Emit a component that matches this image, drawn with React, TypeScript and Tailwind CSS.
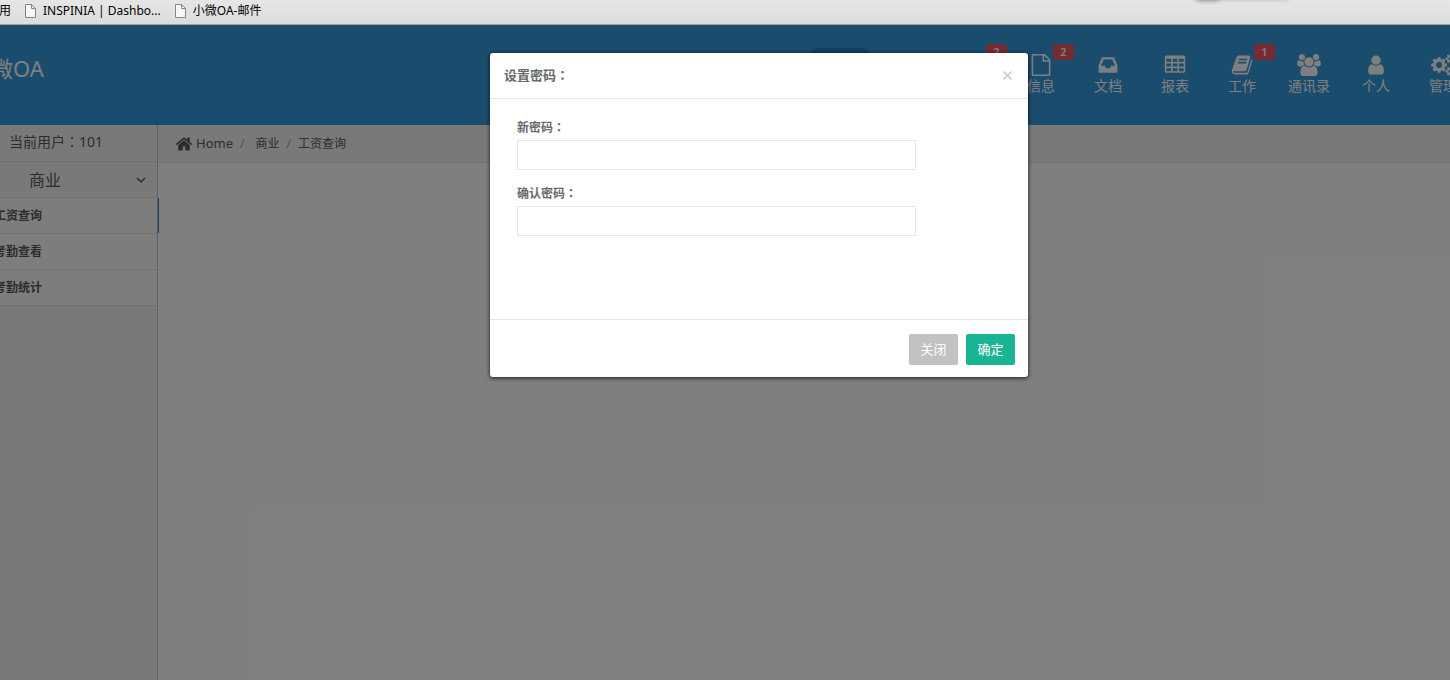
type GlyphProps = {
  d: string;
  className?: string;
  viewBox?: string;
};

const GLYPHS = {
  file: 'M1596 380q28 28 48 76t20 88v1152q0 40-28 68t-68 28h-1344q-40 0-68-28t-28-68v-1600q0-40 28-68t68-28h896q40 0 88 20t76 48zm-444-244v376h376q-10-29-22-41l-313-313q-12-12-41-22zm384 1528v-1024h-416q-40 0-68-28t-28-68v-416h-768v1536h1280z',
  inbox:
    'M1151 960h316q-1-3-2.5-8t-2.5-8l-212-496h-708l-212 496q-1 2-2.5 8t-2.5 8h316l95 192h320zm513 30v482q0 26-19 45t-45 19h-1408q-26 0-45-19t-19-45v-482q0-62 25-123l238-552q10-25 36.5-42t52.5-17h832q26 0 52.5 17t36.5 42l238 552q25 61 25 123z',
  table:
    'M224 128h1344a160 160 0 0 1 160 160v1088a160 160 0 0 1-160 160h-1344a160 160 0 0 1-160-160v-1088a160 160 0 0 1 160-160z' +
    'M192 384v256h384v-256zM704 384v256h384v-256zM1216 384v256h384v-256z' +
    'M192 768v256h384v-256zM704 768v256h384v-256zM1216 768v256h384v-256z' +
    'M192 1152v256h384v-256zM704 1152v256h384v-256zM1216 1152v256h384v-256z',
  book: 'M1703 478q40 57 18 129l-275 906q-19 64-76.5 107.5t-122.5 43.5h-923q-77 0-148.5-53.5t-99.5-131.5q-24-67-2-127 0-4 3-27t4-37q1-8-3-21.5t-3-19.5q2-11 8-21t16.5-23.5 16.5-23.5q23-38 45-91.5t30-91.5q3-10 .5-30t-.5-28q3-11 17-28t17-23q21-36 42-92t25-90q1-9-2.5-32t.5-28q4-13 22-30.5t22-22.5q19-26 42.5-84.5t27.5-96.5q1-8-3-25.5t-2-26.5q2-8 9-18t18-23 17-21q8-12 16.5-30.5t15-35 16-36 19.5-32 26.5-23.5 36-11.5 47.5 5.5l-1 3q38-9 51-9h761q74 0 114 56t18 130l-274 906q-36 119-71.5 153.5t-128.5 34.5h-869q-27 0-38 15-11 16-1 43 24 70 144 70h923q29 0 56-15.5t35-41.5l300-987q7-22 5-57 38 15 59 43zm-1064 2q-4 13 2 22.5t20 9.5h608q13 0 25.5-9.5t16.5-22.5l21-64q4-13-2-22.5t-20-9.5h-608q-13 0-25.5 9.5t-16.5 22.5zm-83 256q-4 13 2 22.5t20 9.5h608q13 0 25.5-9.5t16.5-22.5l21-64q4-13-2-22.5t-20-9.5h-608q-13 0-25.5 9.5t-16.5 22.5z',
  users:
    'M529 896q-162 5-265 128h-134q-82 0-138-40.5t-56-118.5q0-353 124-353 6 0 43.5 21t97.5 42.5 119 21.5q67 0 133-23-5 37-5 66 0 139 81 256zm1071 637q0 120-73 189.5t-194 69.5h-874q-121 0-194-69.5t-73-189.5q0-53 3.5-103.5t14-109 26.5-108.5 43-97.5 62-81 85.5-53.5 111.5-20q10 0 43 21.5t73 48 107 48 135 21.5 135-21.5 107-48 73-48 43-21.5q61 0 111.5 20t85.5 53.5 62 81 43 97.5 26.5 108.5 14 109 3.5 103.5zm-1024-1277q0 106-75 181t-181 75-181-75-75-181 75-181 181-75 181 75 75 181zm704 384q0 159-112.5 271.5t-271.5 112.5-271.5-112.5-112.5-271.5 112.5-271.5 271.5-112.5 271.5 112.5 112.5 271.5zm576 225q0 78-56 118.5t-138 40.5h-134q-103-123-265-128 81-117 81-256 0-29-5-66 66 23 133 23 59 0 119-21.5t97.5-42.5 43.5-21q124 0 124 353zm-128-609q0 106-75 181t-181 75-181-75-75-181 75-181 181-75 181 75 75 181z',
  user: 'M1536 1399q0 109-62.5 187t-150.5 78h-854q-88 0-150.5-78t-62.5-187q0-85 8.5-160.5t31.5-152 58.5-131 94-89 134.5-34.5q131 128 313 128t313-128q76 0 134.5 34.5t94 89 58.5 131 31.5 152 8.5 160.5zm-256-887q0 159-112.5 271.5t-271.5 112.5-271.5-112.5-112.5-271.5 112.5-271.5 271.5-112.5 271.5 112.5 112.5 271.5z',
  cogs: 'M832 896q0-106-75-181t-181-75-181 75-75 181 75 181 181 75 181-75 75-181zm768 512q0-52-38-90t-90-38-90 38-38 90q0 53 37.5 90.5t90.5 37.5 90.5-37.5 37.5-90.5zm0-1024q0-52-38-90t-90-38-90 38-38 90q0 53 37.5 90.5t90.5 37.5 90.5-37.5 37.5-90.5zm-384 421v185q0 10-7 19.5t-16 10.5l-155 24q-11 35-32 76 34 48 90 115 7 11 7 20 0 12-7 19-23 30-82.5 89.5t-78.5 59.5q-11 0-21-7l-115-90q-37 19-77 31-11 108-23 155-7 24-30 24h-186q-11 0-20-7.5t-10-17.5l-23-153q-34-10-75-31l-118 89q-7 7-20 7-11 0-21-8-144-133-144-160 0-9 7-19 10-14 41-53t47-61q-23-44-35-82l-152-24q-10-1-17-9.5t-7-19.5v-185q0-10 7-19.5t16-10.5l155-24q11-35 32-76-34-48-90-115-7-11-7-20 0-12 7-20 22-30 82-89t79-59q11 0 21 7l115 90q34-18 77-32 11-108 23-154 7-24 30-24h186q11 0 20 7.5t10 17.5l23 153q34 10 75 31l118-89q8-7 20-7 11 0 21 8 144 133 144 160 0 8-7 19-12 16-42 54t-45 60q23 48 34 82l152 23q10 2 17 10.5t7 19.5zm640 533v140q0 16-149 31-12 27-30 52 51 113 51 138 0 4-4 7-122 71-124 71-8 0-46-47t-52-68q-20 2-30 2t-30-2q-14 21-52 68t-46 47q-2 0-124-71-4-3-4-7 0-25 51-138-18-25-30-52-149-15-149-31v-140q0-16 149-31 13-29 30-52-51-113-51-138 0-4 4-7 4-2 35-20t59-34 30-16q8 0 46 46.5t52 67.5q20-2 30-2t30 2q51-71 92-112l6-2q4 0 124 70 4 3 4 7 0 25-51 138 17 23 30 52 149 15 149 31zm0-1024v140q0 16-149 31-12 27-30 52 51 113 51 138 0 4-4 7-122 71-124 71-8 0-46-47t-52-68q-20 2-30 2t-30-2q-14 21-52 68t-46 47q-2 0-124-71-4-3-4-7 0-25 51-138-18-25-30-52-149-15-149-31v-140q0-16 149-31 13-29 30-52-51-113-51-138 0-4 4-7 4-2 35-20t59-34 30-16q8 0 46 46.5t52 67.5q20-2 30-2t30 2q51-71 92-112l6-2q4 0 124 70 4 3 4 7 0 25-51 138 17 23 30 52 149 15 149 31z',
  home: 'M1472 992v480q0 26-19 45t-45 19h-384v-384h-256v384h-384q-26 0-45-19t-19-45v-480q0-1 .5-3t.5-3l575-474 575 474q1 2 1 6zm223-69l-62 74q-8 9-21 11h-3q-13 0-21-7l-692-577-692 577q-12 8-24 7-13-2-21-11l-62-74q-8-10-7-23.5t11-21.5l719-599q32-26 76-26t76 26l244 204v-195q0-14 9-23t23-9h192q14 0 23 9t9 23v408l219 182q10 8 11 21.5t-7 23.5z',
};

function Glyph({ d, className, viewBox = '0 0 1792 1792' }: GlyphProps) {
  return (
    <svg viewBox={viewBox} className={className} fill="currentColor" fillRule="evenodd" aria-hidden="true">
      <path d={d} />
    </svg>
  );
}

const navItems = [
  { label: '首页', icon: GLYPHS.home, active: true },
  { label: '流程', icon: GLYPHS.table },
  { label: '邮件', icon: GLYPHS.inbox, badge: 2 },
  { label: '信息', icon: GLYPHS.file, badge: 2 },
  { label: '文档', icon: GLYPHS.inbox },
  { label: '报表', icon: GLYPHS.table },
  { label: '工作', icon: GLYPHS.book, badge: 1 },
  { label: '通讯录', icon: GLYPHS.users, wide: true },
  { label: '个人', icon: GLYPHS.user },
  { label: '管理', icon: GLYPHS.cogs, wide: true },
];

const menuItems = [
  { label: '工资查询', active: true },
  { label: '考勤查看' },
  { label: '考勤统计' },
];

function PageIcon() {
  return (
    <svg viewBox="0 0 11 14" className="h-3.5 w-[11px] shrink-0" aria-hidden="true">
      <path d="M.5.5h6l4 4v9H.5z" fill="#f7f7f7" stroke="#858585" />
      <path d="M6.5.5v4h4" fill="none" stroke="#858585" />
    </svg>
  );
}

// The TC face centres the full-width colon in its box
function Colon() {
  return <span className="font-['Noto_Sans_CJK_TC',sans-serif]">：</span>;
}

function BookmarkBar() {
  return (
    <div className="relative flex h-[25px] shrink-0 items-center overflow-hidden border-b border-[#a3a39c] bg-linear-to-b from-[#e6e6e6] to-[#dcdcdc] pb-0.5 text-xs whitespace-nowrap text-black">
      <a href="#apps" className="-ml-[13px]">应用</a>
      <a href="#inspinia" className="ml-3.5 flex items-center gap-[7px]">
        <PageIcon />
        INSPINIA | Dashbo...
      </a>
      <a href="#mail" className="ml-3.5 flex items-center gap-[7px]">
        <PageIcon />
        小微OA-邮件
      </a>
      {/* shadow of the tab strip above */}
      <span className="absolute -top-2 right-[160px] h-1.5 w-[95px] rounded-full shadow-[0_1px_5px_#aaa]" />
      <span className="absolute -top-2 right-[230px] h-2 w-6 rounded-full shadow-[0_1px_4px_#999]" />
    </div>
  );
}

function TopBar() {
  return (
    <header className="flex h-[100px] shrink-0 items-start justify-between overflow-hidden bg-[#3498db] text-white">
      <a href="#home" className="mt-7 -ml-[31px] text-[22px] leading-[30px]">小微OA</a>
      <nav className="mt-[23px] -mr-[22px] flex shrink-0 gap-[9px]">
        {navItems.map((item) => (
          <a
            key={item.label}
            href={`#${item.label}`}
            className={`relative flex h-[52px] w-[58px] flex-col items-center rounded-md pt-1.5 text-sm leading-5 ${item.active ? 'bg-[#2080c0]' : ''}`}
          >
            <Glyph
              d={item.icon}
              viewBox={item.wide ? '-64 0 1920 1792' : undefined}
              className={item.wide ? 'h-[22px] w-6' : 'size-[22px]'}
            />
            {item.label}
            {item.badge && (
              <span className="absolute -top-1 left-[41px] flex h-4 w-[21px] items-center justify-center rounded-[3px] bg-[#ed5565] text-[11px] font-semibold">
                {item.badge}
              </span>
            )}
          </a>
        ))}
      </nav>
    </header>
  );
}

function Sidebar() {
  return (
    <aside className="w-[158px] shrink-0 border-r border-[#c4c4c4] bg-[#f2f2f2] text-[#585858]">
      <div className="h-[37px] border-b border-[#e2e2e2] pl-[9px] text-sm leading-8">
        当前用户
        <Colon />
        101
      </div>
      <button
        type="button"
        className="flex h-9 w-full items-center justify-between border-b border-[#e2e2e2] pr-[11px] pl-[29px] text-base"
      >
        商业
        <svg viewBox="0 0 10 6" className="h-1.5 w-2.5" aria-hidden="true">
          <path d="M1 1l4 4 4-4" fill="none" stroke="currentColor" strokeWidth="1.5" />
        </svg>
      </button>
      <ul className="text-xs font-bold">
        {menuItems.map((item) => (
          <li key={item.label} className="relative h-9 border-b border-[#e2e2e2] bg-[#fbfbfb]">
            <a href={`#${item.label}`} className="block overflow-hidden leading-9">
              <span className="-ml-1.5">{item.label}</span>
            </a>
            {item.active && <span className="absolute inset-y-0 -right-0.5 w-px bg-[#2b7dbc]" />}
          </li>
        ))}
      </ul>
    </aside>
  );
}

function Breadcrumb() {
  return (
    <nav className="flex h-[38px] items-center border-b border-[#e5e5e5] bg-[#f2f2f2] pl-[17px] text-xs text-[#585858]">
      <a href="#home" className="flex items-center gap-[3px] text-[13px]">
        <Glyph d={GLYPHS.home} className="size-[18px]" />
        Home
      </a>
      <span className="px-[7px] text-[#a0a0a0]">/</span>
      <a href="#business" className="pl-1">商业</a>
      <span className="px-[7px] text-[#a0a0a0]">/</span>
      <span>工资查询</span>
    </nav>
  );
}

function Field({ id, label }: { id: string; label: string }) {
  return (
    <div>
      <label htmlFor={id} className="mb-0.5 block text-xs leading-5 font-bold">
        {label}
        <Colon />
      </label>
      <input
        id={id}
        type="password"
        className="block h-[30px] w-[399px] border border-[#e5e6e7] bg-white px-3 outline-none"
      />
    </div>
  );
}

function PasswordDialog() {
  return (
    <div
      role="dialog"
      aria-labelledby="dialog-title"
      className="w-[538px] rounded-[3px] bg-white text-[#676a6c] shadow-[0_1px_4px_rgba(0,0,0,0.8)]"
    >
      <div className="flex h-[46px] items-center justify-between border-b border-[#e5e5e5] pr-[15px] pl-3.5">
        <h2 id="dialog-title" className="text-[13px] font-bold">
          设置密码
          <Colon />
        </h2>
        <button type="button" aria-label="关闭对话框" className="text-[#c8c8c8]">
          <svg viewBox="0 0 11 11" className="size-[11px]" aria-hidden="true">
            <path d="M1.5 1.5l8 8M9.5 1.5l-8 8" stroke="currentColor" strokeWidth="1.6" />
          </svg>
        </button>
      </div>
      <form className="flex min-h-[220px] flex-col gap-[13px] px-[27px] pt-[18px]">
        <Field id="new-password" label="新密码" />
        <Field id="confirm-password" label="确认密码" />
      </form>
      <div className="flex justify-end gap-2 border-t border-[#e5e5e5] pt-3.5 pr-[13px] pb-3 text-[13px] text-white">
        <button type="button" className="h-[31px] w-[49px] rounded-[2px] bg-[#c2c2c2]">关闭</button>
        <button type="button" className="h-[31px] w-[49px] rounded-[2px] bg-[#1ab394]">确定</button>
      </div>
    </div>
  );
}

export default function App() {
  return (
    <div className="flex min-h-screen flex-col overflow-hidden bg-white font-['Noto_Sans','Noto_Sans_CJK_SC',sans-serif]">
      <BookmarkBar />
      <div className="relative flex grow flex-col">
        <TopBar />
        <div className="flex grow">
          <Sidebar />
          <main className="grow bg-white">
            <Breadcrumb />
          </main>
        </div>
        <div className="absolute inset-0 flex items-start justify-center bg-black/50 pt-7 pl-[68px]">
          <PasswordDialog />
        </div>
      </div>
    </div>
  );
}
